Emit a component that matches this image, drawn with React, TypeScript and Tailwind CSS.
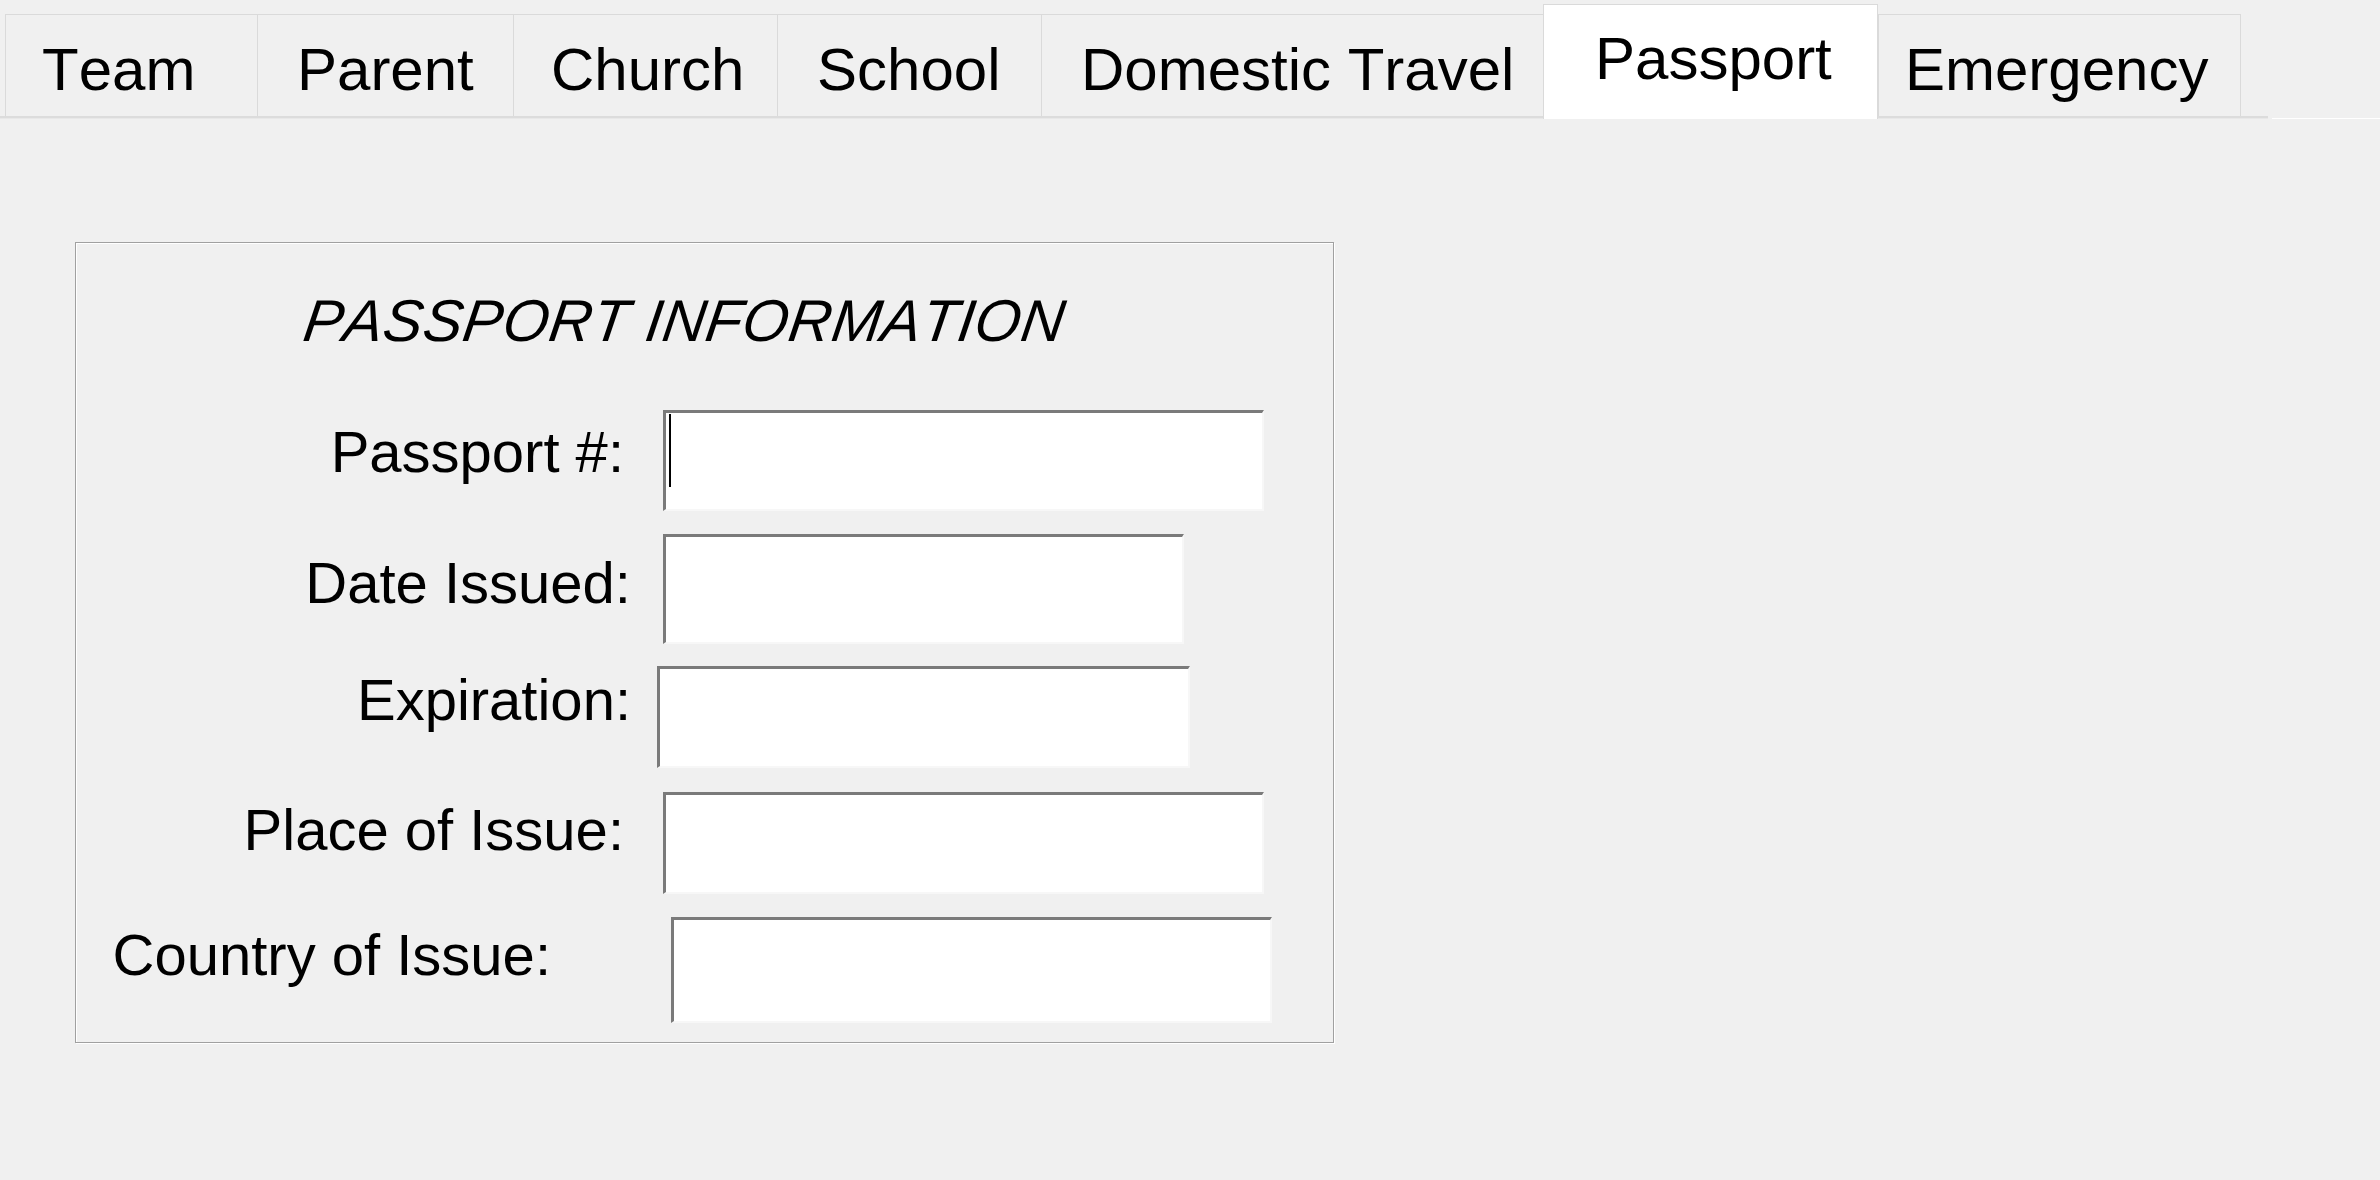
import React from 'react';

interface TabDef {
  label: string;
  width: string;
  pad: string;
  active?: boolean;
}

const tabs: TabDef[] = [
  { label: 'Team', width: 'w-[252px]', pad: 'pl-[36px]' },
  { label: 'Parent', width: 'w-[256px]', pad: 'pl-[39px]' },
  { label: 'Church', width: 'w-[264px]', pad: 'pl-[37px]' },
  { label: 'School', width: 'w-[264px]', pad: 'pl-[39px]' },
  { label: 'Domestic Travel', width: 'w-[502px]', pad: 'pl-[39px]' },
  { label: 'Passport', width: 'w-[335px]', pad: 'pl-[51px]', active: true },
  { label: 'Emergency', width: 'w-[363px]', pad: 'pl-[26px]' },
];

interface FieldDef {
  label: string;
  labelWidth: string;
  labelTop: string;
  gap: string;
  inputClass: string;
  rowTop: string;
  caret?: boolean;
}

const fields: FieldDef[] = [
  {
    label: 'Passport #:',
    labelWidth: 'w-[548px]',
    labelTop: 'pt-[13px]',
    gap: 'ml-[39px]',
    inputClass: 'w-[601px] h-[101px]',
    rowTop: 'mt-[58px]',
    caret: true,
  },
  {
    label: 'Date Issued:',
    labelWidth: 'w-[555px]',
    labelTop: 'pt-[20px]',
    gap: 'ml-[32px]',
    inputClass: 'w-[521px] h-[110px]',
    rowTop: 'mt-[23px]',
  },
  {
    label: 'Expiration:',
    labelWidth: 'w-[555px]',
    labelTop: 'pt-[5px]',
    gap: 'ml-[26px]',
    inputClass: 'w-[533px] h-[102px]',
    rowTop: 'mt-[22px]',
  },
  {
    label: 'Place of Issue:',
    labelWidth: 'w-[548px]',
    labelTop: 'pt-[9px]',
    gap: 'ml-[39px]',
    inputClass: 'w-[601px] h-[102px]',
    rowTop: 'mt-[24px]',
  },
  {
    label: 'Country of Issue:',
    labelWidth: 'w-[475px]',
    labelTop: 'pt-[9px]',
    gap: 'ml-[120px]',
    inputClass: 'w-[601px] h-[106px]',
    rowTop: 'mt-[23px]',
  },
];

function TabBar() {
  return (
    <div>
      <div className="flex items-end h-[116px] pl-[5px]">
        {tabs.map((t, i) =>
          t.active ? (
            <div
              key={t.label}
              className={`relative z-10 ${t.width} ${t.pad} h-[115px] -mb-[3px] pt-[24px] bg-white border border-b-0 border-[#dadada] text-[60px] leading-[60px] text-black whitespace-nowrap`}
            >
              {t.label}
            </div>
          ) : (
            <div
              key={t.label}
              className={`${t.width} ${t.pad} h-[102px] pt-[25px] bg-[#f0f0f0] border-t border-l border-[#dadada] ${
                i === tabs.length - 1 ? 'border-r' : ''
              } text-[60px] leading-[60px] text-black whitespace-nowrap`}
            >
              {t.label}
            </div>
          )
        )}
      </div>
      {/* panel top edge */}
      <div className="flex items-end h-[3px]">
        <div className="w-[2268px] h-[3px] bg-[#dcdcdc] border-b border-[#e8e8e8]" />
        <div className="flex-1 h-[1px] bg-white ml-[4px]" />
      </div>
    </div>
  );
}

function Field({ f }: { f: FieldDef }) {
  return (
    <div className={`flex items-start ${f.rowTop}`}>
      <div
        className={`${f.labelWidth} ${f.labelTop} text-right text-[58px] leading-[58px] text-black whitespace-nowrap`}
      >
        {f.label}
      </div>
      <div
        className={`relative ${f.gap} ${f.inputClass} bg-white border-t-[3px] border-l-[3px] border-r-2 border-b-2 border-t-[#7a7a7a] border-l-[#7a7a7a] border-r-[#f7f7f7] border-b-[#f7f7f7]`}
      >
        {f.caret && (
          <span className="absolute left-[3px] top-[1px] w-[2px] h-[73px] bg-black" />
        )}
      </div>
    </div>
  );
}

export default function App() {
  return (
    <div className="w-[2380px] h-[1180px] overflow-hidden bg-[#f0f0f0] font-['Liberation_Sans',Arial,sans-serif] [font-kerning:none]">
      <TabBar />

      <div className="ml-[75px] mt-[123px] w-[1259px] h-[801px] border border-[#a0a0a0] shadow-[inset_1px_1px_0_#ffffff,1px_1px_0_#ffffff] pt-[49px]">
        <div className="pl-[224px] h-[60px]">
          <span className="inline-block origin-bottom-left -skew-x-[8deg] translate-y-[-1px] text-[59px] leading-[60px] italic text-black whitespace-nowrap tracking-[0.5px]">
            PASSPORT INFORMATION
          </span>
        </div>
        {fields.map((f) => (
          <Field key={f.label} f={f} />
        ))}
      </div>
    </div>
  );
}
